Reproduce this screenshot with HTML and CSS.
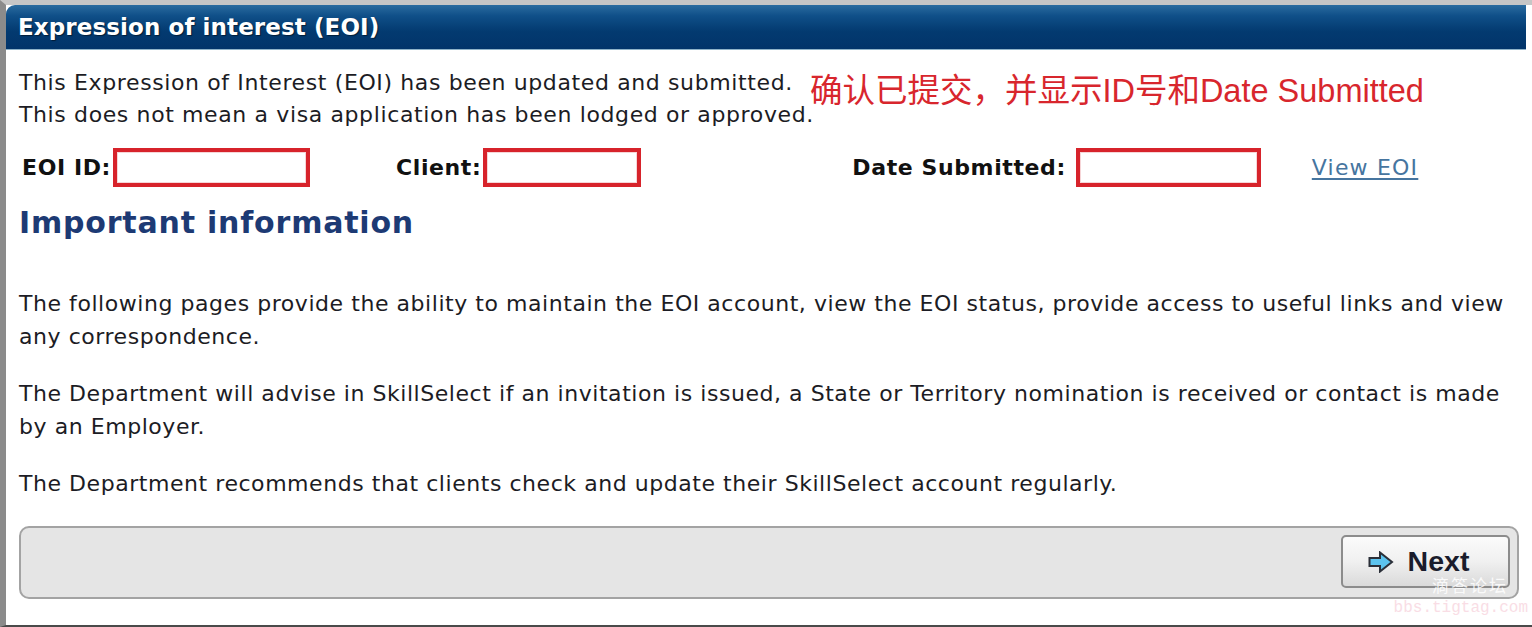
FILE: index.html
```html
<!DOCTYPE html>
<html lang="en">
<head>
    <meta charset="UTF-8">
    <title>Expression of interest (EOI)</title>
    <link rel="stylesheet" href="styles.css">
</head>
<body>

<div class="window">
    <div class="panel-header">
        <h1>Expression of interest (EOI)</h1>
    </div>

    <div class="panel-body">
        <div class="intro">
            <div class="intro-text">
                <p>This Expression of Interest (EOI) has been updated and submitted.</p>
                <p>This does not mean a visa application has been lodged or approved.</p>
            </div>
            <div class="note">确认已提交，并显示ID号和Date Submitted</div>
        </div>

        <div class="fields">
            <div class="field field-id">
                <span class="field-label">EOI ID:</span>
                <span class="field-box box-id"></span>
            </div>
            <div class="field field-client">
                <span class="field-label">Client:</span>
                <span class="field-box box-client"></span>
            </div>
            <div class="field field-date">
                <span class="field-label">Date Submitted:</span>
                <span class="field-box box-date"></span>
            </div>
            <a class="view-link" href="#">View EOI</a>
        </div>

        <h2>Important information</h2>

        <div class="info">
            <p>The following pages provide the ability to maintain the EOI account, view the EOI status, provide access to useful links and view any correspondence.</p>
            <p>The Department will advise in SkillSelect if an invitation is issued, a State or Territory nomination is received or contact is made by an Employer.</p>
            <p>The Department recommends that clients check and update their SkillSelect account regularly.</p>
        </div>

        <div class="button-bar">
            <button class="btn-next">
                <svg width="26" height="22" viewBox="0 0 26 22">
                    <path d="M1.5 7 H12 V1.5 L24 11 L12 20.5 V15 H1.5 Z" fill="#5cc3ee" stroke="#2b2f38" stroke-width="2" stroke-linejoin="miter"/>
                </svg>
                <span>Next</span>
            </button>
        </div>
    </div>

    <div class="watermark">
        <span class="wm-cn">滴答论坛</span>
        <span class="wm-url">bbs.tigtag.com</span>
    </div>
</div>

</body>
</html>
```

FILE: styles.css
```css
* {
    box-sizing: border-box;
    margin: 0;
    padding: 0;
}

body {
    background: #ffffff;
    font-family: "DejaVu Sans", "Noto Sans", sans-serif;
    color: #1c1c24;
}

.window {
    position: relative;
    width: 1532px;
    height: 627px;
    border-left: 6px solid #8b8b8b;
    border-top: 5px solid #c6c6c6;
    border-bottom: 2px solid #4a4a4a;
    padding-right: 6px;
    display: flex;
    flex-direction: column;
}

/* Header */
.panel-header {
    height: 45px;
    border-top-left-radius: 9px;
    background: linear-gradient(to bottom, #2a6b9f 0%, #0f4f88 25%, #033a70 60%, #02346a 100%);
    border-bottom: 1px solid #8fb3c9;
    display: flex;
    align-items: center;
    padding-left: 12px;
}

.panel-header h1 {
    color: #ffffff;
    font-size: 23px;
    font-weight: 700;
    text-shadow: 1px 1px 1px rgba(0, 0, 0, 0.5);
    letter-spacing: 0.1px;
}

/* Body */
.panel-body {
    flex-grow: 1;
    padding: 17px 7px 0 13px;
    display: flex;
    flex-direction: column;
}

.intro {
    display: flex;
    align-items: flex-start;
}

.intro-text p {
    font-size: 22px;
    line-height: 32px;
    letter-spacing: 0.62px;
}

.note {
    color: #d8262d;
    font-family: "Liberation Sans", "Noto Sans CJK SC", sans-serif;
    font-size: 32.5px;
    line-height: 36px;
    margin-top: 6px;
    margin-left: -4px;
}

/* Fields */
.fields {
    display: flex;
    align-items: center;
    margin-top: 16px;
    height: 40px;
}

.field {
    display: flex;
    align-items: center;
    gap: 2px;
}

.field-id { margin-left: 3px; }
.field-client { margin-left: 86px; }
.field-date { margin-left: 211px; gap: 10px; }

.field-label {
    font-size: 22px;
    font-weight: 700;
    color: #111;
    letter-spacing: 0.6px;
}

.field-box {
    display: block;
    height: 39px;
    border: 4px solid #d7232b;
    background: #fff;
    box-shadow: inset 0 0 0 1px #f6d5d7;
}

.box-id { width: 197px; }
.box-client { width: 158px; }
.box-date { width: 185px; }

.view-link {
    margin-left: 51px;
    font-size: 22px;
    color: #46759f;
    text-decoration: underline;
    text-underline-offset: 3px;
    letter-spacing: 1.2px;
}

h2 {
    margin-top: 18px;
    font-size: 30px;
    font-weight: 700;
    color: #1d3a74;
    line-height: 36px;
    letter-spacing: 0.8px;
}

/* Info paragraphs */
.info {
    margin-top: 46px;
    display: flex;
    flex-direction: column;
    gap: 24px;
}

.info p {
    font-size: 22px;
    line-height: 33px;
    letter-spacing: 0.55px;
}

/* Button bar */
.button-bar {
    margin-top: 26px;
    height: 73px;
    background: #e5e5e5;
    border: 2px solid #a3a3a3;
    border-radius: 10px;
    display: flex;
    justify-content: flex-end;
    padding: 7px 7px 0 0;
}

.btn-next {
    width: 169px;
    height: 53px;
    border: 2px solid #8c8c8c;
    border-radius: 5px;
    background: linear-gradient(to bottom, #fbfbfb 0%, #f0f0f0 50%, #dadada 100%);
    display: flex;
    align-items: center;
    justify-content: center;
    gap: 14px;
    padding-right: 14px;
    font-family: "Liberation Sans", Arial, sans-serif;
    font-size: 28.5px;
    font-weight: 700;
    color: #1a1c2c;
}

/* Watermark overlay */
.watermark {
    position: absolute;
    right: 4px;
    bottom: 8px;
    display: flex;
    flex-direction: column;
    align-items: flex-end;
    pointer-events: none;
}

.wm-cn {
    font-family: "Noto Sans CJK SC", sans-serif;
    font-size: 17px;
    line-height: 20px;
    color: rgba(255, 255, 255, 0.85);
    margin-right: 20px;
    letter-spacing: 2px;
}

.wm-url {
    font-family: "Liberation Mono", monospace;
    font-size: 16px;
    color: #f9dde5;
    margin-top: 4px;
}
```
